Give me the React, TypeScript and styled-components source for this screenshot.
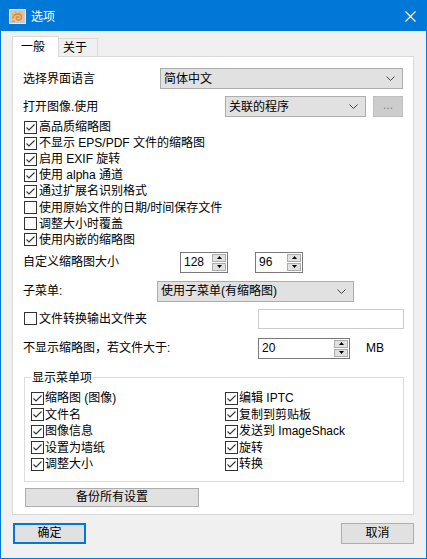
import React from "react";
import styled, { createGlobalStyle } from "styled-components";

const GlobalStyle = createGlobalStyle`
  html, body {
    margin: 0;
    padding: 0;
    background: #f0f0f0;
  }
  body {
    font-family: "Liberation Sans", "Noto Sans CJK SC", sans-serif;
    font-size: 12px;
    color: #000;
  }
`;

const Window = styled.div`
  width: 427px;
  height: 559px;
  box-sizing: border-box;
  border: 1px solid #0078d7;
  background: #f0f0f0;
  display: flex;
  flex-direction: column;
`;

const TitleBar = styled.div`
  height: 30px;
  flex-shrink: 0;
  background: #0078d7;
  color: #fff;
  display: flex;
  align-items: center;
  padding: 0 10px 0 8px;
  gap: 5px;
`;

const TitleText = styled.span`
  flex: 1;
  line-height: 16px;
  font-family: "Noto Sans CJK SC", sans-serif;
`;

const Body = styled.div`
  padding: 5px 12px 0 11px;
`;

const Tabs = styled.div`
  display: flex;
  align-items: flex-end;
  height: 20px;
`;

const Tab = styled.div<{ $active?: boolean }>`
  box-sizing: border-box;
  height: ${(p) => (p.$active ? "21px" : "18px")};
  padding: ${(p) => (p.$active ? "0 13px 0 8px" : "0 10px 0 4px")};
  margin-left: ${(p) => (p.$active ? "0" : "-1px")};
  margin-bottom: ${(p) => (p.$active ? "-1px" : "0")};
  background: ${(p) => (p.$active ? "#fff" : "#f0f0f0")};
  border: 1px solid #d9d9d9;
  border-bottom: none;
  position: relative;
  z-index: ${(p) => (p.$active ? 1 : 0)};
  display: flex;
  align-items: center;
  line-height: 16px;
`;

const Panel = styled.div`
  background: #fff;
  border: 1px solid #d9d9d9;
  padding: 11px 10px 7px 10px;
  display: flex;
  flex-direction: column;
`;

const Row = styled.div<{ $h?: number; $mt?: number }>`
  display: flex;
  align-items: center;
  height: ${(p) => p.$h ?? 21}px;
  margin-top: ${(p) => p.$mt ?? 0}px;
  line-height: 16px;
  white-space: nowrap;
`;

const Label = styled.span<{ $w?: number }>`
  width: ${(p) => (p.$w ? `${p.$w}px` : "auto")};
  flex-shrink: 0;
`;

const Combo = styled.div<{ $w?: number }>`
  box-sizing: border-box;
  width: ${(p) => (p.$w ? `${p.$w}px` : "auto")};
  flex: ${(p) => (p.$w ? "none" : "1")};
  height: 21px;
  background: #e1e1e1;
  border: 1px solid #adadad;
  display: flex;
  align-items: center;
  padding: 0 7px 0 3px;
  justify-content: space-between;
`;

const SmallButton = styled.div`
  box-sizing: border-box;
  width: 30px;
  height: 21px;
  margin-left: 7px;
  background: #cccccc;
  border: 1px solid #bfbfbf;
  color: #838383;
  display: flex;
  align-items: center;
  justify-content: center;
  padding-bottom: 3px;
`;

const CheckList = styled.div`
  margin-top: 2px;
  display: flex;
  flex-direction: column;
`;

const CheckRow = styled.label<{ $h?: number; $gap?: number }>`
  display: flex;
  align-items: center;
  height: ${(p) => p.$h ?? 16.1}px;
  gap: ${(p) => p.$gap ?? 2}px;
  padding-left: 1px;
  line-height: 16px;
  white-space: nowrap;
`;

const Spins = styled.div`
  display: flex;
  gap: 27px;
`;

const SpinBox = styled.div<{ $w: number }>`
  box-sizing: border-box;
  width: ${(p) => p.$w}px;
  height: 21px;
  border: 1px solid #7a7a7a;
  background: #fff;
  display: flex;
  align-items: stretch;
`;

const SpinValue = styled.span`
  flex: 1;
  display: flex;
  align-items: center;
  padding-left: 3px;
`;

const SpinButtons = styled.div`
  width: 14px;
  display: flex;
  flex-direction: column;
  padding: 1px 1px 1px 0;
  gap: 1px;
`;

const SpinHalf = styled.div`
  flex: 1;
  background: #e1e1e1;
  border: 1px solid #adadad;
  display: flex;
  align-items: center;
  justify-content: center;
`;

const TextField = styled.div`
  box-sizing: border-box;
  width: 146px;
  height: 20px;
  margin-left: auto;
  margin-right: -1px;
  border: 1px solid #cccccc;
  background: #fff;
`;

const Unit = styled.span`
  margin-left: 16px;
`;

const GroupBox = styled.fieldset`
  box-sizing: border-box;
  width: 380px;
  margin: 12px 0 0 1px;
  min-width: 0;
  padding: 5px 6px 8px 6px;
  border: 1px solid #dcdcdc;
`;

const Legend = styled.legend`
  padding: 0 1px;
  line-height: 14px;
`;

const GroupGrid = styled.div`
  display: grid;
  grid-template-columns: 194px 1fr;
  grid-auto-flow: column;
  grid-template-rows: repeat(5, 16.6px);
`;

const PushButton = styled.div<{ $w: number; $h?: number; $default?: boolean }>`
  box-sizing: border-box;
  width: ${(p) => p.$w}px;
  height: ${(p) => p.$h ?? 21}px;
  background: #e1e1e1;
  border: ${(p) => (p.$default ? "2px solid #0078d7" : "1px solid #adadad")};
  display: flex;
  align-items: center;
  justify-content: center;
  line-height: 16px;
`;

const BackupButton = styled(PushButton)`
  margin: 6px 0 0 2px;
`;

const Footer = styled.div`
  display: flex;
  justify-content: space-between;
  padding: 8px 12px 0 12px;
`;

const AppIcon = () => (
  <svg width="17" height="15" viewBox="0 0 17 15">
    <rect x="0.5" y="0.5" width="16" height="14" fill="#c9c9c9" stroke="#e8e8e8" />
    <path d="M4 9.5 C4 5.5 8 4 11 5.5 C13.5 7 13 10.5 10 11 C7.5 11.4 6.5 9 8 8 C9 7.3 10.3 8 10 9" fill="none" stroke="#f08a1c" strokeWidth="1.6" />
    <path d="M3 5 L5 6.5 M6 2.5 L7 4.5 M11 2.5 L10.3 4.5 M14 5 L12.5 6.3" stroke="#f5a623" strokeWidth="1.2" />
    <path d="M3 12.5 L6 12" stroke="#f08a1c" strokeWidth="1.2" />
  </svg>
);

const CloseIcon = () => (
  <svg width="11" height="11" viewBox="0 0 11 11">
    <path d="M0.5 0.5 L10.5 10.5 M10.5 0.5 L0.5 10.5" stroke="#fff" strokeWidth="1.1" />
  </svg>
);

const Chevron = () => (
  <svg width="9" height="5" viewBox="0 0 9 5">
    <path d="M0.5 0.5 L4.5 4.5 L8.5 0.5" fill="none" stroke="#444" />
  </svg>
);

const Check = ({ checked }: { checked?: boolean }) => (
  <svg width="13" height="13" viewBox="0 0 13 13" style={{ flexShrink: 0 }}>
    <rect x="0.5" y="0.5" width="12" height="12" fill="#fff" stroke="#333" />
    {checked && <path d="M2.5 6.5 L5 9 L10.5 3.5" fill="none" stroke="#333" strokeWidth="1.1" />}
  </svg>
);

const Arrow = ({ up }: { up?: boolean }) => (
  <svg width="5" height="3" viewBox="0 0 5 3">
    <path d={up ? "M0 3 L2.5 0 L5 3 Z" : "M0 0 L2.5 3 L5 0 Z"} fill="#000" />
  </svg>
);

const Spinner = ({ value, width }: { value: string; width: number }) => (
  <SpinBox $w={width}>
    <SpinValue>{value}</SpinValue>
    <SpinButtons>
      <SpinHalf>
        <Arrow up />
      </SpinHalf>
      <SpinHalf>
        <Arrow />
      </SpinHalf>
    </SpinButtons>
  </SpinBox>
);

const options: [string, boolean][] = [
  ["高品质缩略图", true],
  ["不显示 EPS/PDF 文件的缩略图", true],
  ["启用 EXIF 旋转", true],
  ["使用 alpha 通道", true],
  ["通过扩展名识别格式", true],
  ["使用原始文件的日期/时间保存文件", false],
  ["调整大小时覆盖", false],
  ["使用内嵌的缩略图", true],
];

const menuItems = [
  "缩略图 (图像)",
  "文件名",
  "图像信息",
  "设置为墙纸",
  "调整大小",
  "编辑 IPTC",
  "复制到剪贴板",
  "发送到 ImageShack",
  "旋转",
  "转换",
];

const App = () => {
  return (
    <>
      <GlobalStyle />
      <Window>
        <TitleBar>
          <AppIcon />
          <TitleText>选项</TitleText>
          <CloseIcon />
        </TitleBar>
        <Body>
          <Tabs>
            <Tab $active>一般</Tab>
            <Tab>关于</Tab>
          </Tabs>
          <Panel>
            <Row>
              <Label $w={137}>选择界面语言</Label>
              <Combo>
                <span>简体中文</span>
                <Chevron />
              </Combo>
            </Row>
            <Row $mt={7}>
              <Label>打开图像.使用</Label>
              <Combo $w={141} style={{ marginLeft: "auto" }}>
                <span>关联的程序</span>
                <Chevron />
              </Combo>
              <SmallButton>...</SmallButton>
            </Row>
            <CheckList>
              {options.map(([text, checked]) => (
                <CheckRow key={text}>
                  <Check checked={checked} />
                  {text}
                </CheckRow>
              ))}
            </CheckList>
            <Row $mt={4}>
              <Label $w={157}>自定义缩略图大小</Label>
              <Spins>
                <Spinner value="128" width={48} />
                <Spinner value="96" width={48} />
              </Spins>
            </Row>
            <Row $mt={8}>
              <Label $w={134}>子菜单:</Label>
              <Combo $w={197}>
                <span>使用子菜单(有缩略图)</span>
                <Chevron />
              </Combo>
            </Row>
            <Row $h={20} $mt={7}>
              <CheckRow>
                <Check />
                文件转换输出文件夹
              </CheckRow>
              <TextField />
            </Row>
            <Row $mt={9}>
              <Label $w={235}>不显示缩略图，若文件大于:</Label>
              <Spinner value="20" width={92} />
              <Unit>MB</Unit>
            </Row>
            <GroupBox>
              <Legend>显示菜单项</Legend>
              <GroupGrid>
                {menuItems.map((item) => (
                  <CheckRow key={item} $h={16.6} $gap={1} style={{ paddingLeft: 0 }}>
                    <Check checked />
                    {item}
                  </CheckRow>
                ))}
              </GroupGrid>
            </GroupBox>
            <BackupButton $w={174} $h={19}>
              备份所有设置
            </BackupButton>
          </Panel>
        </Body>
        <Footer>
          <PushButton $w={73} $default>
            确定
          </PushButton>
          <PushButton $w={73}>取消</PushButton>
        </Footer>
      </Window>
    </>
  );
};

export default App;
